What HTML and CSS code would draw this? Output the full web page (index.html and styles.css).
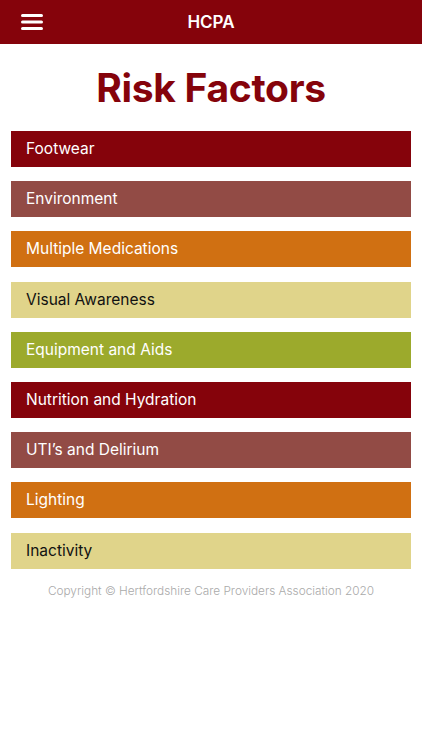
FILE: index.html
```html
<!DOCTYPE html>
<html>
<head>
    <title>HCPA - Risk Factors</title>
    <link rel="stylesheet" href="styles.css">
</head>
<body>
    <header class="topbar">
        <button class="menu-btn" aria-label="Menu">
            <svg width="22" height="16" viewBox="0 0 22 16">
                <rect x="0" y="0" width="22" height="3" rx="1.5" fill="#fff"/>
                <rect x="0" y="6.5" width="22" height="3" rx="1.5" fill="#fff"/>
                <rect x="0" y="13" width="22" height="3" rx="1.5" fill="#fff"/>
            </svg>
        </button>
        <div class="topbar-title">HCPA</div>
    </header>

    <main class="content">
        <h1 class="page-title">Risk Factors</h1>

        <ul class="factor-list">
            <li class="factor red">Footwear</li>
            <li class="factor brown">Environment</li>
            <li class="factor orange">Multiple Medications</li>
            <li class="factor sand">Visual Awareness</li>
            <li class="factor olive">Equipment and Aids</li>
            <li class="factor red">Nutrition and Hydration</li>
            <li class="factor brown">UTI’s and Delirium</li>
            <li class="factor orange">Lighting</li>
            <li class="factor sand">Inactivity</li>
        </ul>

        <p class="copyright">Copyright © Hertfordshire Care Providers Association 2020</p>
    </main>
</body>
</html>
```

FILE: styles.css
```css
body {
    margin: 0;
    font-family: Inter, "Noto Sans", Arial, sans-serif;
    background: #fff;
}
.topbar {
    position: relative;
    height: 44px;
    background: #85030b;
    display: flex;
    align-items: center;
    justify-content: center;
}
.menu-btn {
    position: absolute;
    left: 21px;
    top: 14px;
    background: none;
    border: none;
    padding: 0;
    line-height: 0;
}
.topbar-title {
    color: #fff;
    font-size: 17px;
    font-weight: 600;
}
.content {
    padding: 0 11px;
}
.page-title {
    margin: 20px 0 0;
    height: 67px;
    line-height: 48px;
    text-align: center;
    font-size: 39px;
    font-weight: 700;
    color: #85030b;
    letter-spacing: -0.3px;
}
.factor-list {
    list-style: none;
    margin: 0;
    padding: 0;
    display: flex;
    flex-direction: column;
    gap: 14.2px;
}
.factor {
    height: 36px;
    line-height: 36px;
    padding-left: 15px;
    font-size: 15.5px;
    color: #fff;
}
.red { background: #85030b; }
.brown { background: #924b45; }
.orange { background: #d07012; }
.sand { background: #e0d48a; color: #111; }
.olive { background: #9caa2c; }
.copyright {
    margin: 15px 0 0;
    text-align: center;
    font-size: 11.8px;
    font-weight: 300;
    color: #aaaaaa;
}
```
